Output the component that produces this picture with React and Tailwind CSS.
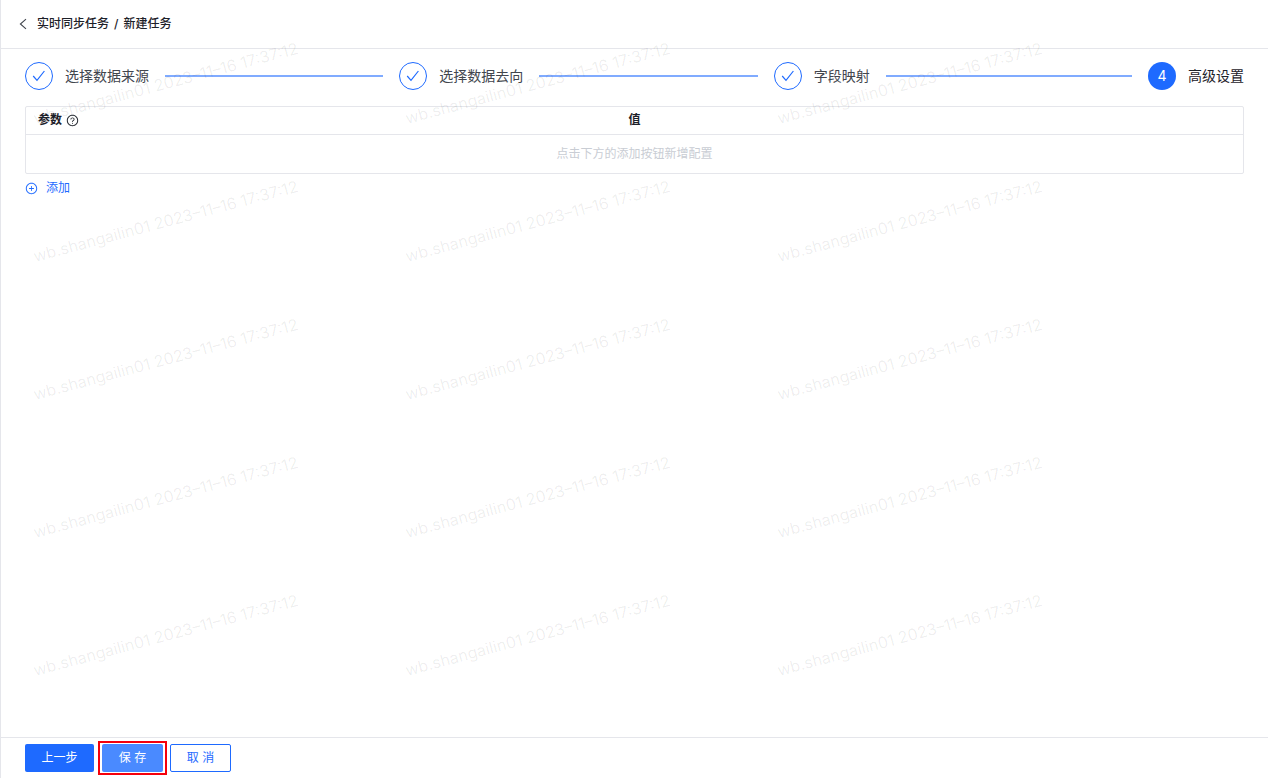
import { useState } from "react";
import { AiOutlinePlusCircle, AiOutlineQuestionCircle } from "react-icons/ai";

const STEPS = ["选择数据来源", "选择数据去向", "字段映射", "高级设置"];
const CURRENT_STEP = 3;

const WATERMARK_TEXT = "wb.shangailin01 2023–11–16 17:37:12";
const WATERMARK_COUNT = 15;

function BackIcon() {
  return (
    <svg width="8" height="12" viewBox="0 0 8 12" fill="none">
      <path d="M7 1.2 1.4 6 7 10.8" stroke="#42464e" strokeWidth="1.1" />
    </svg>
  );
}

function CheckIcon() {
  return (
    <svg width="14" height="12" viewBox="0 0 14 12" fill="none">
      <path d="M1.2 6 5 10.4 12.4 1" stroke="#1e6aff" strokeWidth="1.2" />
    </svg>
  );
}

function Step({ label, index }) {
  const done = index < CURRENT_STEP;

  return (
    <li className={done ? "flex flex-1 items-center" : "flex items-center"}>
      <span
        className={
          done
            ? "flex h-7 w-7 shrink-0 items-center justify-center rounded-full border border-[#1e6aff]"
            : "flex h-7 w-7 shrink-0 items-center justify-center rounded-full bg-[#1e6aff] text-sm text-white"
        }
      >
        {done ? <CheckIcon /> : index + 1}
      </span>
      <span
        className={
          done
            ? "ml-3 text-sm whitespace-nowrap text-[#42464e]"
            : "ml-3 text-sm whitespace-nowrap text-[#1d2129]"
        }
      >
        {label}
      </span>
      {done && <span className="mx-4 h-0.5 flex-1 bg-[#80abff]" />}
    </li>
  );
}

function Watermark() {
  return (
    <div
      aria-hidden="true"
      className="pointer-events-none absolute inset-0 grid auto-rows-[138px] grid-cols-[repeat(3,372px)] content-start overflow-hidden pt-[14px] pl-7"
    >
      {Array.from({ length: WATERMARK_COUNT }, (_, i) => (
        <div key={i} className="flex items-center">
          <span className="-rotate-15 text-base whitespace-nowrap text-black/7">
            {WATERMARK_TEXT}
          </span>
        </div>
      ))}
    </div>
  );
}

function ParamTable({ rows, onChange }) {
  return (
    <div className="rounded-xs border border-[#e5e6eb]">
      <table className="w-full table-fixed text-left text-xs">
        <colgroup>
          <col />
          <col />
          <col className="w-9" />
        </colgroup>
        <thead>
          <tr className="h-[27px] border-b border-[#e5e6eb] text-[#1d2129]">
            <th className="px-3 font-bold">
              <span className="flex items-center gap-1">
                参数
                <AiOutlineQuestionCircle size={13} />
              </span>
            </th>
            <th className="px-3 font-bold">值</th>
            <th />
          </tr>
        </thead>
        <tbody>
          {rows.length === 0 && (
            <tr className="h-[39px]">
              <td colSpan={3} className="text-center text-[#c9cdd4]">
                点击下方的添加按钮新增配置
              </td>
            </tr>
          )}
          {rows.map((row, i) => (
            <tr key={i} className="h-10">
              <td className="px-3">
                <input
                  aria-label="参数"
                  value={row.key}
                  onChange={(e) => onChange(i, "key", e.target.value)}
                  className="h-7 w-full border border-[#e5e6eb] px-2"
                />
              </td>
              <td className="px-3">
                <input
                  aria-label="值"
                  value={row.value}
                  onChange={(e) => onChange(i, "value", e.target.value)}
                  className="h-7 w-full border border-[#e5e6eb] px-2"
                />
              </td>
              <td />
            </tr>
          ))}
        </tbody>
      </table>
    </div>
  );
}

function App() {
  const [rows, setRows] = useState([]);

  const addRow = () => setRows([...rows, { key: "", value: "" }]);

  const changeRow = (index, field, text) => {
    setRows(rows.map((r, i) => (i === index ? { ...r, [field]: text } : r)));
  };

  return (
    <div className="relative flex min-h-screen flex-col border-l border-[#e5e6eb] bg-white font-[Inter,'Noto_Sans_CJK_SC',sans-serif]">
      <header className="flex h-[49px] items-center border-b border-[#e5e6eb] px-[18px] text-xs font-medium text-[#1d2129]">
        <a href="#back" aria-label="返回" className="mr-[10px]">
          <BackIcon />
        </a>
        <nav className="flex gap-[5px]">
          <a href="#tasks">实时同步任务</a>
          <span>/</span>
          <span>新建任务</span>
        </nav>
      </header>

      <main className="flex-1 px-6 pt-3">
        <ol className="mb-4 flex h-[29px] items-center">
          {STEPS.map((label, i) => (
            <Step key={label} label={label} index={i} />
          ))}
        </ol>

        <ParamTable rows={rows} onChange={changeRow} />

        <button
          type="button"
          onClick={addRow}
          className="mt-1 flex h-5 items-center gap-2 text-xs text-[#1e6aff]"
        >
          <AiOutlinePlusCircle size={13} />
          添加
        </button>
      </main>

      <footer className="flex h-[41px] items-center border-t border-[#e5e6eb] px-6 text-xs">
        <button
          type="button"
          className="h-7 w-[69px] rounded-xs bg-[#1e6aff] text-white"
        >
          上一步
        </button>
        <span className="mr-[3px] ml-1 flex border-2 border-[#f5000b] px-0.5 py-px">
          <button
            type="button"
            className="h-7 w-[61px] rounded-xs bg-[#4a8aff] text-white"
          >
            保 存
          </button>
        </span>
        <button
          type="button"
          className="h-7 w-[61px] rounded-xs border border-[#1e6aff] text-[#1e6aff]"
        >
          取 消
        </button>
      </footer>

      <Watermark />
    </div>
  );
}

export default App;
